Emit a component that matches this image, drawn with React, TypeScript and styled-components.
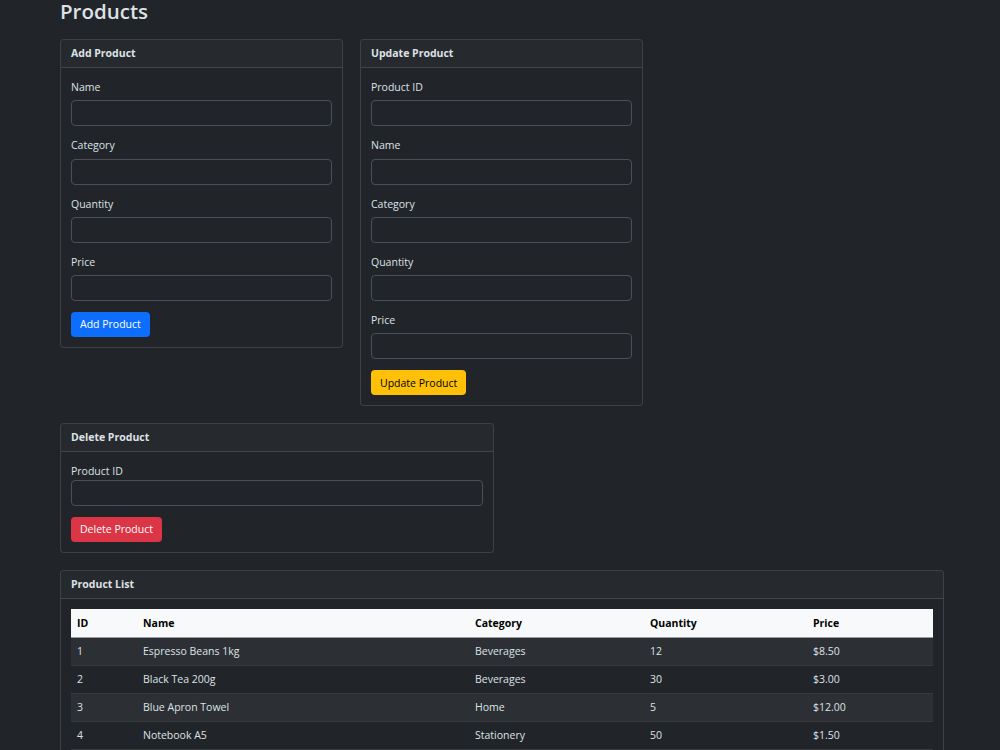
import React from "react";
import styled, { createGlobalStyle } from "styled-components";

const Global = createGlobalStyle`
  html, body { margin: 0; padding: 0; background: #212529; }
  body {
    color: #dee2e6;
    font-family: "Segoe UI", "Open Sans", "Noto Sans", sans-serif;
    font-size: 10.5px;
    line-height: 16.8px;
  }
  * { box-sizing: border-box; }
`;

const Page = styled.div`
  width: 884px;
  margin: 0 0 0 60px;
  padding: 0;
`;

const Title = styled.h2`
  margin: -2px 0 14px;
  font-size: 20.5px;
  font-weight: 600;
  line-height: 27px;
  color: #dee2e6;
`;

const Row = styled.div`
  display: flex;
  align-items: flex-start;
  gap: 17px;
  margin-bottom: 17px;
`;

const Card = styled.section<{ $w?: number }>`
  width: ${(p) => (p.$w ? `${p.$w}px` : "100%")};
  border: 1px solid rgba(255, 255, 255, 0.13);
  border-radius: 4px;
  background: #212529;
  overflow: hidden;
`;

const CardHeader = styled.div`
  padding: 5px 10px;
  height: 28px;
  font-weight: 700;
  background: rgba(255, 255, 255, 0.025);
  border-bottom: 1px solid rgba(255, 255, 255, 0.13);
  color: #dee2e6;
`;

const CardBody = styled.div<{ $table?: boolean }>`
  padding: ${(p) => (p.$table ? "10px 10px 10px" : "11px 10px 10px")};
`;

const Field = styled.div`
  margin-bottom: 11px;
`;

const Label = styled.label<{ $tight?: boolean }>`
  display: block;
  margin-bottom: ${(p) => (p.$tight ? "0" : "4.5px")};
  line-height: 16.8px;
`;

const Input = styled.input`
  display: block;
  width: 100%;
  height: 26px;
  padding: 4px 8px;
  background: #212529;
  border: 1px solid #495057;
  border-radius: 4px;
  color: #dee2e6;
  font: inherit;
  outline: none;
`;

const Button = styled.button<{ $variant: "primary" | "warning" | "danger" }>`
  display: inline-block;
  height: 25px;
  padding: 0 8px;
  border-radius: 4px;
  border: 1px solid transparent;
  font: inherit;
  cursor: pointer;
  background: ${(p) =>
    p.$variant === "primary" ? "#0d6efd" : p.$variant === "warning" ? "#ffc107" : "#dc3545"};
  color: ${(p) => (p.$variant === "warning" ? "#000" : "#fff")};
`;

const Table = styled.table`
  width: 100%;
  border-collapse: collapse;
  table-layout: fixed;
`;

const Th = styled.th<{ $w?: number }>`
  width: ${(p) => (p.$w ? `${p.$w}px` : "auto")};
  text-align: left;
  font-weight: 700;
  padding: 5px 6px;
  height: 28px;
  background: #f8f9fa;
  color: #000;
  border-bottom: 1px solid #9a9b9c;
`;

const Tr = styled.tr<{ $striped: boolean }>`
  background: ${(p) => (p.$striped ? "#2c3034" : "#212529")};
`;

const Td = styled.td`
  padding: 5px 6px;
  height: 28px;
  color: #dee2e6;
  border-bottom: 1px solid #373b3e;
`;

const products = [
  { id: 1, name: "Espresso Beans 1kg", category: "Beverages", qty: 12, price: "$8.50" },
  { id: 2, name: "Black Tea 200g", category: "Beverages", qty: 30, price: "$3.00" },
  { id: 3, name: "Blue Apron Towel", category: "Home", qty: 5, price: "$12.00" },
  { id: 4, name: "Notebook A5", category: "Stationery", qty: 50, price: "$1.50" },
  { id: 5, name: "Gel Pen Set", category: "Stationery", qty: 25, price: "$4.20" },
];

function FormField({ label }: { label: string }) {
  return (
    <Field>
      <Label>{label}</Label>
      <Input />
    </Field>
  );
}

export default function App() {
  return (
    <>
      <Global />
      <Page>
        <Title>Products</Title>
        <Row>
          <Card $w={283}>
            <CardHeader>Add Product</CardHeader>
            <CardBody>
              <FormField label="Name" />
              <FormField label="Category" />
              <FormField label="Quantity" />
              <FormField label="Price" />
              <Button $variant="primary">Add Product</Button>
            </CardBody>
          </Card>
          <Card $w={283}>
            <CardHeader>Update Product</CardHeader>
            <CardBody>
              <FormField label="Product ID" />
              <FormField label="Name" />
              <FormField label="Category" />
              <FormField label="Quantity" />
              <FormField label="Price" />
              <Button $variant="warning">Update Product</Button>
            </CardBody>
          </Card>
        </Row>
        <Row>
          <Card $w={434}>
            <CardHeader>Delete Product</CardHeader>
            <CardBody>
              <Field>
                <Label $tight>Product ID</Label>
                <Input />
              </Field>
              <Button $variant="danger">Delete Product</Button>
            </CardBody>
          </Card>
        </Row>
        <Row>
          <Card>
            <CardHeader>Product List</CardHeader>
            <CardBody $table>
              <Table>
                <thead>
                  <tr>
                    <Th $w={66}>ID</Th>
                    <Th $w={332}>Name</Th>
                    <Th $w={175}>Category</Th>
                    <Th $w={163}>Quantity</Th>
                    <Th>Price</Th>
                  </tr>
                </thead>
                <tbody>
                  {products.map((p, i) => (
                    <Tr key={p.id} $striped={i % 2 === 0}>
                      <Td>{p.id}</Td>
                      <Td>{p.name}</Td>
                      <Td>{p.category}</Td>
                      <Td>{p.qty}</Td>
                      <Td>{p.price}</Td>
                    </Tr>
                  ))}
                </tbody>
              </Table>
            </CardBody>
          </Card>
        </Row>
      </Page>
    </>
  );
}
